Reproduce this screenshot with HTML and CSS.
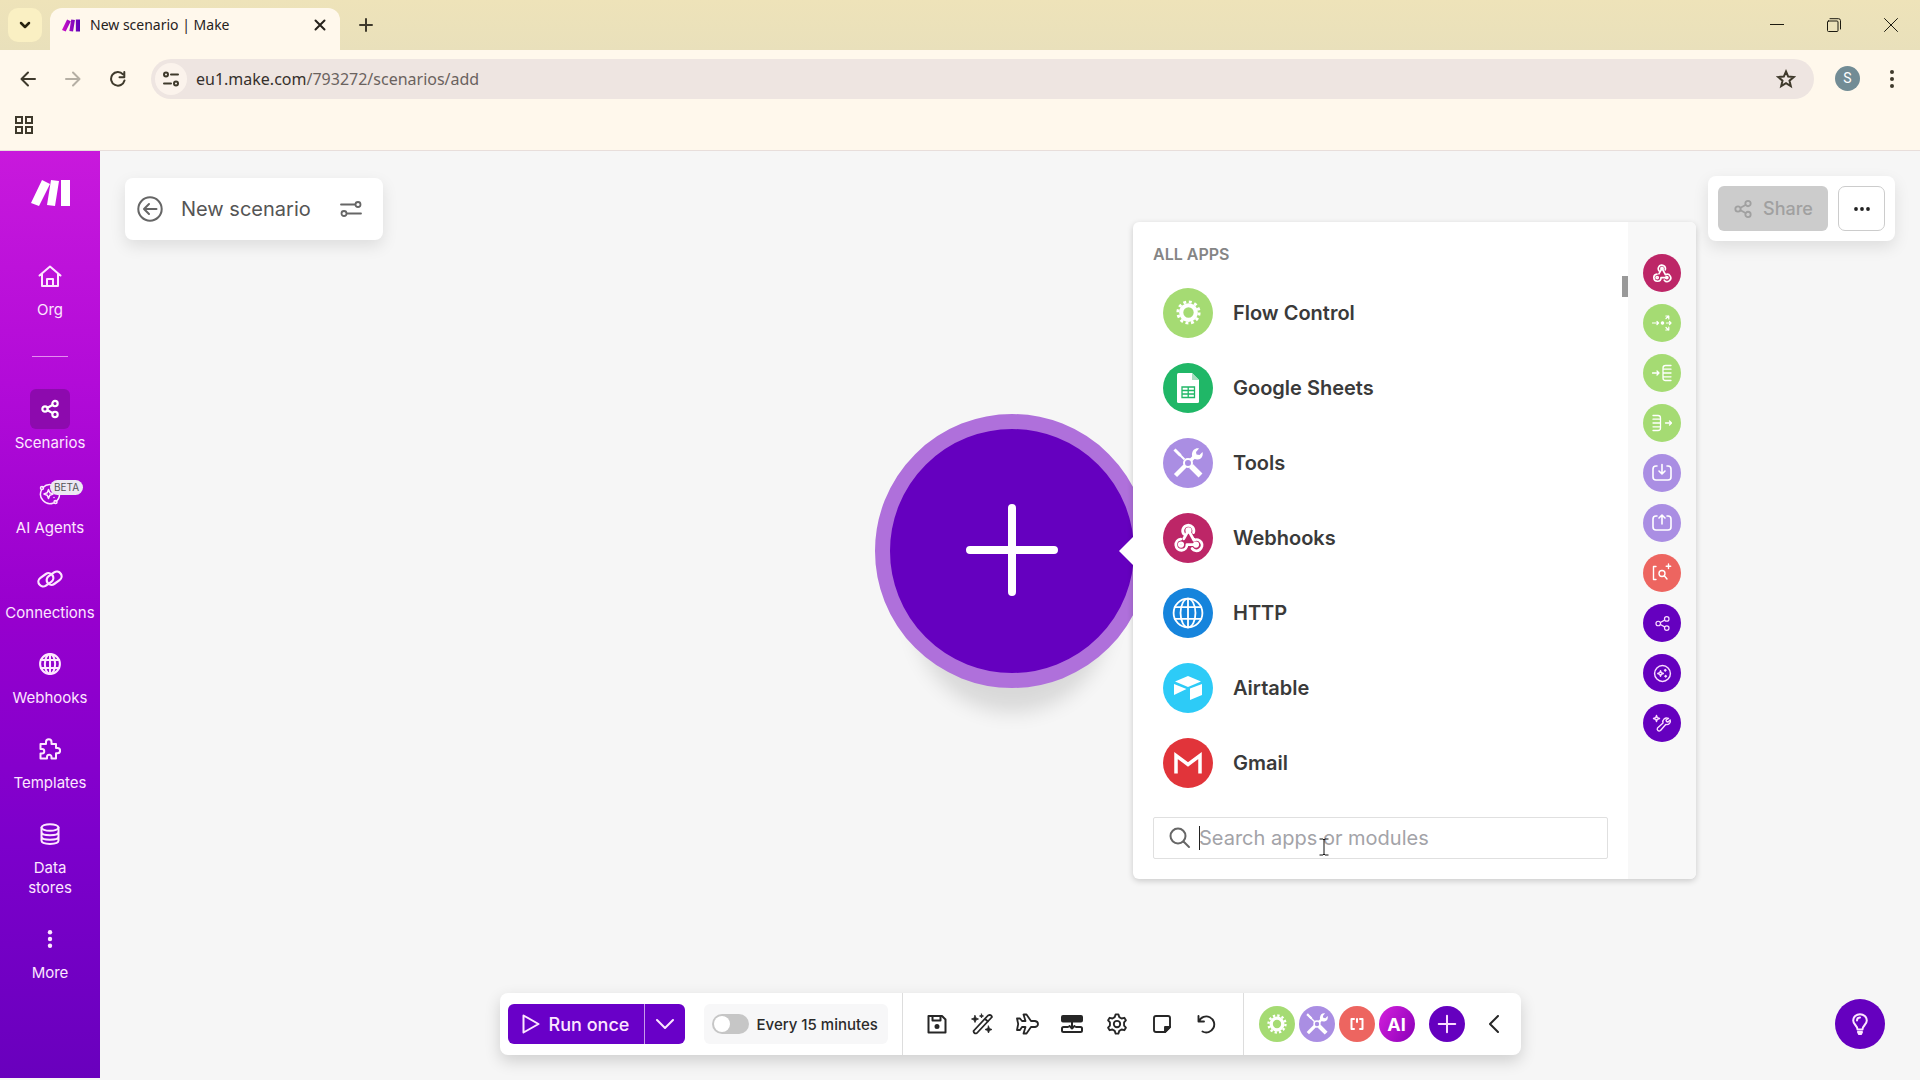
FILE: index.html
```html
<!DOCTYPE html>
<html lang="en">
<head>
<meta charset="utf-8">
<meta name="viewport" content="width=device-width, initial-scale=1">
<title>New scenario | Make</title>
<link rel="stylesheet" href="styles.css">
</head>
<body>
<svg class="defs" aria-hidden="true">
  <defs>
    <linearGradient id="brand" x1="0" y1="0" x2="1" y2="0"><stop offset="0" stop-color="#d010c8"/><stop offset="1" stop-color="#5a00b8"/></linearGradient>
    <symbol id="i-make" viewBox="0 0 39 26"><path d="M11 0l8 4-11 22-8-3zM20 0l8 1-4 25-8-1zM30 0h9v26h-9z"/></symbol>
    <symbol id="i-share" viewBox="0 0 24 24"><circle cx="6" cy="12" r="3.2"/><circle cx="18" cy="5.5" r="3.2"/><circle cx="18" cy="18.500" r="3.200"/><path d="M9 10.500l6-3.300M9 13.500l6 3.300"/></symbol>
    <symbol id="i-hook" viewBox="0 0 24 24"><path d="M8.300 9.300A4.300 4.300 0 1 1 15.900 8.200M12 6.500l4.200 7.600A4.300 4.300 0 1 1 14.800 20.600M12 6.500L8.300 13M17.800 17.500H10.800A4.300 4.300 0 1 1 6 13.300"/><circle cx="12" cy="6.500" r="1.300"/><circle cx="6.200" cy="17.500" r="1.300"/><circle cx="17.800" cy="17.500" r="1.300"/></symbol>
    <symbol id="i-gear-solid" viewBox="0 0 24 24"><circle cx="12" cy="12" r="7" fill="none" stroke="currentColor" stroke-width="4"/><circle cx="12" cy="12" r="10.200" fill="none" stroke="currentColor" stroke-width="2.800" stroke-dasharray="2.800 2.541"/></symbol>
    <symbol id="i-tools" viewBox="0 0 30 30"><g fill="none" stroke="currentColor"><circle cx="15" cy="15" r="4" stroke-width="2"/><path d="M11.500 11.500L5 5" stroke-width="2"/><path d="M1.500 1.500l6 6" stroke-width="3"/><path d="M18 18l9.500 9.500" stroke-width="5.500"/><path d="M12 18l-9.500 9.500" stroke-width="4.500"/><path d="M18 12l4-4" stroke-width="3.500"/></g><path d="M26 .5l-3 3.500.5 2.500 3 .5 3-3c1 4-1 7-4.500 7.500-4 .5-6.500-2-6-5.500C19.500 2 22.500-.3 26 .5z"/></symbol>
    <symbol id="i-globe" viewBox="0 0 30 30"><circle cx="15" cy="15" r="13.500"/><ellipse cx="15" cy="15" rx="7" ry="13.500"/><path d="M15 1.500v27M2.500 9.500h25M2.500 20.500h25"/></symbol>
    <symbol id="i-spark" viewBox="0 0 24 24"><path d="M19.500 6.500A9.500 9.500 0 0 0 5 5.500M3.500 8A9.500 9.500 0 0 0 15.500 21M18 19.500A9.500 9.500 0 0 0 21.500 12"/><circle cx="4" cy="6" r="1.500"/><circle cx="17.500" cy="20" r="1.500"/><path d="M10.500 7.500l1.300 3.200L15 12l-3.200 1.300-1.300 3.200-1.300-3.200L6 12l3.200-1.300z"/><path d="M16 8v.1M16 15.500v.1"/></symbol>
    <symbol id="i-search" viewBox="0 0 24 24"><circle cx="10" cy="10" r="7.500"/><path d="M15.500 15.500L21 21"/></symbol>
    <symbol id="i-plus" viewBox="0 0 24 24"><path d="M12 3v18M3 12h18"/></symbol>
  </defs>
</svg>

<header class="browser">
  <div class="tabstrip">
    <button class="tab-search" aria-label="Search tabs"><svg class="line" width="14" height="14" viewBox="0 0 14 14" stroke-width="2.500"><path d="M3 5l4 4 4-4"/></svg></button>
    <div class="tab">
      <svg width="18" height="13" fill="url(#brand)"><use href="#i-make"/></svg>
      <span class="tab-title">New scenario | Make</span>
      <button class="plain" aria-label="Close tab"><svg class="line" width="12" height="12" viewBox="0 0 12 12" stroke-width="2"><path d="M1.500 1.500l9 9M10.500 1.500l-9 9"/></svg></button>
    </div>
    <button class="plain new-tab" aria-label="New tab"><svg class="line" width="16" height="16" viewBox="0 0 24 24" stroke-width="3"><use href="#i-plus"/></svg></button>
    <div class="window-controls">
      <button class="plain" aria-label="Minimize"><svg class="line" width="14" height="14" viewBox="0 0 14 14"><path d="M0 6.500h14"/></svg></button>
      <button class="plain" aria-label="Restore"><svg class="line" width="14" height="14" viewBox="0 0 14 14"><rect x=".5" y="3" width="10.500" height="10.500" rx="1"/><path d="M3 .7h8.500q2 0 2 2V11"/></svg></button>
      <button class="plain" aria-label="Close"><svg class="line" width="14" height="14" viewBox="0 0 14 14"><path d="M.5.5l13 13M13.500.5l-13 13"/></svg></button>
    </div>
  </div>
  <div class="navbar">
    <button class="plain" aria-label="Back"><svg class="line" width="16" height="16" viewBox="0 0 16 16" stroke-width="2"><path d="M15 8H2M8 1.500L1.500 8 8 14.500"/></svg></button>
    <button class="plain dim" aria-label="Forward"><svg class="line" width="16" height="16" viewBox="0 0 16 16" stroke-width="2"><path d="M1 8h13M8 1.500L14.500 8 8 14.500"/></svg></button>
    <button class="plain" aria-label="Reload"><svg class="line" width="16" height="16" viewBox="0 0 16 16" stroke-width="2"><path d="M14.500 9.500A6.800 6.800 0 1 1 13 3.300M14.300 1v5.200H9.500"/></svg></button>
    <div class="address">
      <span class="site-info"><svg class="line" width="16" height="16" viewBox="0 0 16 16" stroke-width="2"><circle cx="3" cy="3.500" r="2"/><path d="M8 3.500h7M1 12.500h7"/><circle cx="13" cy="12.500" r="2"/></svg></span>
      <span class="url">eu1.make.com<span class="path">/793272/scenarios/add</span></span>
      <button class="plain" aria-label="Bookmark this page"><svg class="line" width="20" height="20" viewBox="0 0 20 20" stroke-width="2"><path stroke-linejoin="miter" d="M10 2.500l2.200 5.100 5.500.5-4.200 3.600 1.300 5.400-4.800-2.900-4.800 2.900 1.300-5.400-4.200-3.600 5.500-.5z"/></svg></button>
    </div>
    <span class="avatar">S</span>
    <button class="plain kebab" aria-label="Browser menu"><svg width="6" height="18" viewBox="0 0 6 18" fill="currentColor"><circle cx="3" cy="2" r="2"/><circle cx="3" cy="9" r="2"/><circle cx="3" cy="16" r="2"/></svg></button>
  </div>
  <div class="bookmarks">
    <button class="plain" aria-label="Tab groups"><svg class="line" width="18" height="18" viewBox="0 0 18 18" stroke-width="2"><path stroke-linejoin="miter" d="M1 1h6v6H1zM11 1h6v6h-6zM1 11h6v6H1zM11 11h6v6h-6z"/></svg></button>
  </div>
</header>

<div class="app">
  <nav class="sidebar">
    <a class="logo" href="#" aria-label="Make"><svg width="39" height="26" fill="#fff"><use href="#i-make"/></svg></a>
    <a class="nav-item" href="#"><span class="nav-icon"><svg class="line" width="24" height="24" viewBox="0 0 24 24" stroke-width="2"><path d="M1.500 11.500L12 2.500l10.500 9M4 10v12h16V10M9 22v-7h6v7"/></svg></span>Org</a>
    <span class="rule"></span>
    <a class="nav-item active" href="#"><span class="nav-icon"><svg class="line" width="20" height="20" stroke-width="2.600"><use href="#i-share"/></svg></span>Scenarios</a>
    <a class="nav-item" href="#"><span class="nav-icon"><svg class="line" width="24" height="24" stroke-width="1.500"><use href="#i-spark"/></svg><span class="beta">BETA</span></span>AI Agents</a>
    <a class="nav-item" href="#"><span class="nav-icon"><svg class="line" width="26" height="22" viewBox="0 0 26 22" stroke-width="2.200"><rect x="1" y="7" width="16" height="9.500" rx="4.700" transform="rotate(-35 9 12)"/><rect x="9" y="5.500" width="16" height="9.500" rx="4.700" transform="rotate(-35 17 10)"/></svg></span>Connections</a>
    <a class="nav-item" href="#"><span class="nav-icon"><svg class="line" width="22" height="22" stroke-width="2.800"><use href="#i-globe"/></svg></span>Webhooks</a>
    <a class="nav-item" href="#"><span class="nav-icon"><svg class="line" width="22" height="22" viewBox="0 0 22 22" stroke-width="2"><path d="M1.500 6H7V4a2.500 2.500 0 0 1 5.500 0v2H17v4h1.500a2.500 2.500 0 0 1 0 5.200H17v5.300h-4.500V19a2 2 0 0 0-4.500 0v1.500H1.500v-5H3a2.200 2.200 0 0 0 0-4.500H1.500z"/></svg></span>Templates</a>
    <a class="nav-item" href="#"><span class="nav-icon"><svg class="line" width="20" height="22" viewBox="0 0 20 22" stroke-width="2"><ellipse cx="10" cy="4.500" rx="8.500" ry="3.300"/><path d="M1.500 4.500v13c0 4.500 17 4.500 17 0v-13M1.500 9c0 4.300 17 4.300 17 0M1.500 13.500c0 4.300 17 4.300 17 0"/></svg></span>Data<br>stores</a>
    <a class="nav-item" href="#"><span class="nav-icon"><svg width="6" height="18" viewBox="0 0 6 18" fill="currentColor"><circle cx="3" cy="2.200" r="2.200"/><circle cx="3" cy="9" r="2.200"/><circle cx="3" cy="15.800" r="2.200"/></svg></span>More</a>
  </nav>

  <main class="canvas">
    <div class="topbar">
      <div class="title-card">
        <button class="plain" aria-label="Back to scenarios"><svg class="line" width="26" height="26" viewBox="0 0 26 26" stroke-width="2"><circle cx="13" cy="13" r="11.700"/><path d="M19.500 13h-12M12 8l-5 5 5 5"/></svg></button>
        <h1>New scenario</h1>
        <button class="plain" aria-label="Scenario inputs"><svg class="line" width="22" height="18" viewBox="0 0 22 18" stroke-width="1.800"><path d="M1 4.500h14M7 13.500h14"/><circle cx="18" cy="4.500" r="2.500"/><circle cx="4" cy="13.500" r="2.500"/></svg></button>
      </div>
      <div class="actions-card">
        <button class="share" disabled><svg class="line" width="20" height="20" stroke-width="2.200"><use href="#i-share"/></svg>Share</button>
        <button class="more" aria-label="More options"><svg width="16" height="4" viewBox="0 0 16 4" fill="currentColor"><circle cx="2" cy="2" r="1.900"/><circle cx="8" cy="2" r="1.900"/><circle cx="14" cy="2" r="1.900"/></svg></button>
      </div>
    </div>

    <button class="node" aria-label="Add a module"><svg class="line" width="94" height="94" viewBox="0 0 94 94" stroke-width="8"><path d="M47 4v84M5 46h84"/></svg></button>

    <section class="picker">
      <div class="apps">
        <h2>ALL APPS</h2>
        <ul class="app-list">
          <li><button class="app-row"><span class="badge flow"><svg width="25" height="25"><use href="#i-gear-solid"/></svg></span>Flow Control</button></li>
          <li><button class="app-row"><span class="badge sheets"><svg width="22" height="30" viewBox="0 0 22 30" fill="#fff"><path d="M1.500 0H15l7 7v21.500q0 1.500-1.500 1.500h-19Q0 30 0 28.500v-27Q0 0 1.500 0z"/><path fill="#a5dfc0" d="M15 0l7 7h-7z"/><path fill="none" stroke="#20b767" stroke-width="1.300" d="M5 14h12.500v10.500H5zM5 17.500h12.500M5 21h12.500M11.200 14v10.500"/></svg></span>Google Sheets</button></li>
          <li><button class="app-row"><span class="badge tools"><svg width="30" height="30" fill="currentColor"><use href="#i-tools"/></svg></span>Tools</button></li>
          <li><button class="app-row"><span class="badge hooks"><svg class="line" width="31" height="31" stroke-width="2.200"><use href="#i-hook"/></svg></span>Webhooks</button></li>
          <li><button class="app-row"><span class="badge http"><svg class="line" width="32" height="32" stroke-width="1.700"><use href="#i-globe"/></svg></span>HTTP</button></li>
          <li><button class="app-row"><span class="badge airtable"><svg width="28" height="26" viewBox="0 0 28 26" fill="#fff"><path d="M14 1l13 5.500L14 12 1 6.500zM28 9v11l-12 5V13.500zM0 9l12.500 5L0 20z"/></svg></span>Airtable</button></li>
          <li><button class="app-row"><span class="badge gmail"><svg width="28" height="22" viewBox="0 0 28 22" fill="none" stroke="#fff" stroke-width="3.500"><path d="M2 21.500V3.500l12 9 12-9v18"/></svg></span>Gmail</button></li>
        </ul>
        <div class="search">
          <svg class="line" width="24" height="24" stroke-width="2"><use href="#i-search"/></svg>
          <input type="text" placeholder="Search apps or modules" aria-label="Search apps or modules">
          <span class="caret"></span>
          <svg class="pointer" width="10" height="18" viewBox="0 0 10 18"><path d="M.5 1H4l1 1 1-1h3.500M5 2v14M.5 17H4l1-1 1 1h3.500"/></svg>
        </div>
        <span class="thumb"></span>
      </div>
      <div class="quick">
        <button class="dot hooks" aria-label="Webhook"><svg class="line" width="20" height="20" stroke-width="2"><use href="#i-hook"/></svg></button>
        <button class="dot flow" aria-label="Router"><svg class="line" width="20" height="20" viewBox="0 0 20 20" stroke-width="1.200"><path d="M.5 10h6M5 8.500L6.500 10 5 11.500M14.500 10H19M17.500 8.500L19 10l-1.500 1.500M14 5.500l2.500-2.500M13.800 3h3v3M14 14.500l2.500 2.500M16.800 14v3h-3"/><circle cx="10.500" cy="10" r="1.200" fill="currentColor"/></svg></button>
        <button class="dot flow" aria-label="Iterator"><svg class="line" width="20" height="20" viewBox="0 0 20 20" stroke-width="1.300"><path d="M.5 10H7M5 8l2 2-2 2M19 2.500h-5.500Q11 2.500 11 5v10q0 2.500 2.500 2.500H19M11 6.200h8M11 10h8M11 13.800h8"/></svg></button>
        <button class="dot flow" aria-label="Array aggregator"><svg class="line" width="20" height="20" viewBox="0 0 20 20" stroke-width="1.300"><path d="M13.500 10h6M17.500 8l2 2-2 2M1 2.500h5q2.500 0 2.500 2.500v10q0 2.500-2.500 2.500H1M1 6.200h7M1 10h7M1 13.800h7"/></svg></button>
        <button class="dot tools" aria-label="Set variable"><svg class="line" width="20" height="20" viewBox="0 0 20 20" stroke-width="1.600"><path d="M5 3H4Q1 3 1 6v8q0 3 3 3h12q3 0 3-3V6q0-3-3-3h-1M10 1.500v9M7 8l3 3 3-3"/></svg></button>
        <button class="dot tools" aria-label="Get variable"><svg class="line" width="20" height="20" viewBox="0 0 20 20" stroke-width="1.600"><path d="M5 3H4Q1 3 1 6v8q0 3 3 3h12q3 0 3-3V6q0-3-3-3h-1M10 11V2M7 5l3-3 3 3"/></svg></button>
        <button class="dot parser" aria-label="Match pattern"><svg class="line" width="20" height="20" viewBox="0 0 20 20" stroke-width="1.400"><path d="M4 3.500H1.500v13H4M16.500 1v4.500M14.200 3.200h4.500M12.500 13l2.500 3"/><circle cx="10" cy="10.500" r="3"/></svg></button>
        <button class="dot make" aria-label="Scenarios"><svg class="line" width="17" height="17" stroke-width="1.700"><use href="#i-share"/></svg></button>
        <button class="dot make" aria-label="AI agent"><svg class="line" width="19" height="19" viewBox="0 0 24 24" stroke-width="1.800"><circle cx="12" cy="12" r="10"/><path d="M9.500 8.500l1 2.500 2.500 1-2.500 1-1 2.500-1-2.500L6 12l2.500-1zM15.500 7v2M14.500 8h2M16 14.500v2M15 15.500h2"/></svg></button>
        <button class="dot make" aria-label="AI tools"><svg class="line" width="20" height="20" viewBox="0 0 20 20" stroke-width="1.400"><path d="M4.500 2.500l.8 2.200 2.200.8-2.200.8-.8 2.200-.8-2.200-2.200-.8 2.200-.8zM16.500 5.500l-2.500 1.500.5 1.500 1.500.5 2.200-2c1 3-1.500 5-4.500 4.500L8.500 17.500c-2 1.500-4-.5-3-2.500l5.500-5C10 7 13 4 16.500 5.500z"/></svg></button>
      </div>
    </section>

    <div class="bottombar">
      <div class="controls">
        <div class="group run-group">
          <div class="run">
            <button class="run-main"><svg class="line" width="18" height="20" viewBox="0 0 18 20" stroke-width="2"><path d="M1.500 1.500l15 8.500-15 8.500z"/></svg>Run once</button>
            <button class="run-menu" aria-label="Run options"><svg class="line" width="18" height="10" viewBox="0 0 18 10" stroke-width="2"><path d="M1 1l8 8 8-8"/></svg></button>
          </div>
          <label class="schedule"><input type="checkbox" class="switch">Every 15 minutes</label>
        </div>
        <div class="group icons">
          <button class="plain" aria-label="Save"><svg class="line" width="20" height="20" viewBox="0 0 20 20" stroke-width="2"><path d="M2 2h13l3.500 3.500V18.500H1.500V2zM5.500 2v4.500h8V2"/><circle cx="10" cy="12.500" r="1.500" fill="currentColor"/></svg></button>
          <button class="plain" aria-label="Auto-align"><svg class="line" width="22" height="22" viewBox="0 0 22 22" stroke-width="1.800"><path d="M2.500 18L17 2.500q3-1.500 4 1.500L6 20q-3 1.500-3.500-2zM14 6l3 2.500"/><path fill="currentColor" stroke-width=".8" d="M4 2.500l1 2.500 2.500 1L5 7 4 9.500 3 7 .5 6 3 5zM17.500 13l1 2.500L21 16.500l-2.500 1-1 2.500-1-2.500-2.500-1 2.500-1zM10.500 1l.5 1.500 1.500.5-1.500.5-.5 1.500-.5-1.500L8.500 3l1.500-.5z"/></svg></button>
          <button class="plain" aria-label="Explain flow"><svg class="line" width="24" height="22" viewBox="0 0 24 22" stroke-width="1.800"><path d="M8.500 1.500h3L16 8h4q3 .5 3 3t-3 3h-4l-4.500 6.500h-3L10.500 14H7l-2 3H2l1.200-6L2 5.500h3L7 8h3.500z"/></svg></button>
          <button class="plain" aria-label="Align modules"><svg class="line" width="22" height="18" viewBox="0 0 22 18" stroke-width="2"><rect x="1" y="1" width="20" height="5.500" rx="1" fill="currentColor"/><path d="M7 12H2.500Q1 12 1 13.500v2Q1 17 2.500 17h17q1.500 0 1.500-1.500v-2q0-1.500-1.500-1.500H15M11 7v6M8.500 11l2.500 2.500 2.500-2.500"/></svg></button>
          <button class="plain" aria-label="Settings"><svg class="line" width="22" height="22" viewBox="0 0 24 24" stroke-width="2"><path d="M9.500 4.500l1-3h3l1 3 2.500 1.500 3-.8 1.700 2.800-2 2.300v3.400l2 2.300-1.700 2.800-3-.8-2.500 1.500-1 3h-3l-1-3L7 18l-3 .8L2.300 16l2-2.300v-3.400l-2-2.300L4 5.200l3 .8z"/><circle cx="12" cy="12" r="3.500"/></svg></button>
          <button class="plain" aria-label="Notes"><svg class="line" width="18" height="18" viewBox="0 0 18 18" stroke-width="1.900"><path d="M3 1h12q2 0 2 2v9l-5 5H3q-2 0-2-2V3q0-2 2-2z"/><path fill="currentColor" d="M12 17v-5h5z"/></svg></button>
          <button class="plain" aria-label="Undo"><svg class="line" width="20" height="20" viewBox="0 0 20 20" stroke-width="1.900"><path d="M1.500 2v5.500H7M2 7A8 8 0 1 1 5.500 17.500"/></svg></button>
        </div>
        <div class="group favorites">
          <button class="fav flow" aria-label="Flow Control"><svg width="20" height="20"><use href="#i-gear-solid"/></svg></button>
          <button class="fav tools" aria-label="Tools"><svg width="22" height="22" fill="currentColor"><use href="#i-tools"/></svg></button>
          <button class="fav parser" aria-label="Text parser"><svg class="line" width="14" height="12" viewBox="0 0 14 12" stroke-width="2"><path d="M4 1H1.500v10H4M10 1h2.500v10H10M7 1v3"/></svg></button>
          <button class="fav ai">AI</button>
          <button class="fav make add" aria-label="Add favorite"><svg class="line" width="22" height="22" stroke-width="2.200"><use href="#i-plus"/></svg></button>
          <button class="plain collapse" aria-label="Collapse"><svg class="line" width="10" height="18" viewBox="0 0 10 18" stroke-width="2"><path d="M9 1L1 9l8 8"/></svg></button>
        </div>
      </div>
      <button class="help" aria-label="Tips"><svg class="line" width="16" height="22" viewBox="0 0 16 22" stroke-width="2"><path d="M5.500 16.500C5.500 12.500 1.200 11.500 1.200 7.500a6.800 6.300 0 0 1 13.600 0c0 4-4.300 5-4.300 9zM8 4.500Q5 4.500 5 7.500"/><path fill="currentColor" d="M6 19h4l-1 2H7z"/></svg></button>
    </div>
  </main>
</div>
</body>
</html>
```
FILE: styles.css
```css
* { box-sizing: border-box; }

body {
  margin: 0;
  min-height: 100vh;
  display: flex;
  flex-direction: column;
  font-family: Inter, "Liberation Sans", sans-serif;
  background: #f6f6f6;
  overflow: hidden;
}

button { font: inherit; color: inherit; border: 0; padding: 0; cursor: pointer; }
svg { display: block; flex: none; }
.defs { position: absolute; width: 0; height: 0; }
.line { fill: none; stroke: currentColor; stroke-linecap: round; stroke-linejoin: round; }
.plain { display: grid; place-items: center; background: none; }

/* Browser chrome */
.browser {
  background: #fff8ec;
  border-bottom: 1px solid #e8dedb;
  color: #3f3a2c;
  font-family: "Noto Sans", "Open Sans", sans-serif;
}
.tabstrip {
  height: 50px;
  display: flex;
  align-items: center;
  padding: 0 14px 0 8px;
  background: linear-gradient(#eee3b9, #e9e0bb);
}
.tab-search {
  width: 34px;
  height: 34px;
  display: grid;
  place-items: center;
  border-radius: 10px;
  background: #faf0c3;
  color: #26220f;
}
.tab {
  align-self: stretch;
  width: 290px;
  margin: 8px 0 0 8px;
  padding: 0 14px 8px 12px;
  display: flex;
  align-items: center;
  border-radius: 12px 12px 0 0;
  background: #fff8ec;
  color: #26221c;
}
.tab-title { flex: 1; padding-left: 10px; font-size: 14px; line-height: 20px; }
.new-tab { margin-left: 18px; }
.window-controls { display: flex; gap: 43px; margin-left: auto; padding-right: 8px; color: #1c1a10; }
.navbar { height: 57px; display: flex; align-items: center; padding: 0 25px 0 20px; gap: 29px; }
.dim { color: #b5afa4; }
.address {
  flex: 1;
  height: 40px;
  margin-left: -4px;
  padding: 0 18px 0 4px;
  display: flex;
  align-items: center;
  border-radius: 20px;
  background: #eee5e1;
}
.site-info {
  width: 32px;
  height: 32px;
  display: grid;
  place-items: center;
  border-radius: 50%;
  background: #fbf3ec;
}
.url { flex: 1; padding-left: 9px; font-size: 16px; line-height: 24px; color: #35302c; }
.path { color: #6a625e; }
.avatar {
  width: 25px;
  height: 25px;
  margin-left: -8px;
  border-radius: 50%;
  background: #728c95;
  color: #fff;
  font: 14px/25px Roboto, sans-serif;
  text-align: center;
}
.bookmarks { height: 43px; padding: 9px 15px; display: flex; align-items: flex-start; }

/* Application frame */
.app { flex: 1; display: flex; padding-bottom: 2px; }
.sidebar {
  width: 100px;
  padding-top: 29px;
  display: flex;
  flex-direction: column;
  align-items: center;
  gap: 21px;
  background: linear-gradient(#c819dc, #b20bd8 25%, #9700ce 50%, #7c00cb 75%, #6900bd);
  color: #fde6ff;
}
.logo { margin-bottom: 29px; }
.nav-item {
  display: flex;
  flex-direction: column;
  align-items: center;
  font-size: 15px;
  font-weight: 400;
  line-height: 20px;
  text-align: center;
  color: inherit;
  text-decoration: none;
}
.nav-icon {
  position: relative;
  width: 40px;
  height: 40px;
  margin-bottom: 4px;
  display: grid;
  place-items: center;
  border-radius: 6px;
}
.active .nav-icon { background: #8d0aae; color: #fff; }
.rule { width: 36px; height: 1px; margin: 15px 0 11px; background: #e58df0; }
.beta {
  position: absolute;
  left: 20px;
  top: 6px;
  padding: 0 4px;
  border-radius: 8px;
  background: #ece8f2;
  color: #555;
  font-size: 10px;
  line-height: 15px;
}

/* Scenario canvas */
.canvas {
  position: relative;
  flex: 1;
  display: flex;
  flex-direction: column;
  justify-content: space-between;
  padding: 25px 25px 23px;
}
.topbar { display: flex; justify-content: space-between; align-items: center; }
.title-card,
.actions-card {
  display: flex;
  align-items: center;
  border-radius: 8px;
  background: #fff;
  box-shadow: 0 6px 16px rgba(0, 0, 0, .1);
}
.title-card { height: 62px; padding: 0 21px 0 12px; color: #666; }
.title-card h1 { margin: 0 29px 0 18px; font-size: 20px; font-weight: 400; line-height: 28px; color: #555; }
.actions-card { height: 65px; padding: 0 10px; gap: 10px; }
.share {
  width: 110px;
  height: 45px;
  display: flex;
  align-items: center;
  justify-content: center;
  gap: 10px;
  border-radius: 6px;
  background: #ccc;
  color: #a0a0a0;
  font-size: 18px;
  font-weight: 500;
}
.more {
  width: 47px;
  height: 45px;
  display: grid;
  place-items: center;
  border: 1px solid #ccc;
  border-radius: 7px;
  background: #fff;
  color: #222;
}

.node {
  position: absolute;
  left: calc(50% - 135px);
  top: 263px;
  width: 274px;
  height: 274px;
  display: grid;
  place-items: center;
  border: 15px solid #af70db;
  border-radius: 50%;
  background: #6500bf;
  color: #fff;
  box-shadow: 0 64px 20px -40px rgba(0, 0, 0, .12);
}

/* Module picker */
.picker {
  position: absolute;
  left: calc(50% + 123px);
  top: 71px;
  display: flex;
  border-radius: 6px;
  background: #fff;
  box-shadow: 0 2px 6px rgba(0, 0, 0, .18);
}
.picker::before {
  content: "";
  position: absolute;
  left: -14px;
  top: 315px;
  border: solid transparent;
  border-width: 14px 14px 14px 0;
  border-right-color: #fff;
}
.apps { position: relative; width: 495px; padding: 20px; }
.apps h2 { margin: 0; font-size: 16px; font-weight: 600; line-height: 24px; color: #858585; }
.app-list { margin: 9px 0 17px; padding: 0; list-style: none; }
.app-row {
  width: 100%;
  height: 75px;
  padding-left: 10px;
  display: flex;
  align-items: center;
  gap: 20px;
  background: none;
  font-size: 20px;
  font-weight: 600;
  color: #3a3a3a;
}
.badge, .dot, .fav { display: grid; place-items: center; border-radius: 50%; color: #fff; }
.badge { width: 50px; height: 50px; }
.flow { background: #a5db73; }
.sheets { background: #20b767; }
.tools { background: #aa8ee3; }
.hooks { background: #bd2667; }
.http { background: #1684dc; }
.airtable { background: #2dcbf7; }
.gmail { background: #e1343a; }
.parser { background: #ed6560; }
.make { background: #6500bf; color: #fbdcff; }
.search {
  position: relative;
  height: 42px;
  display: flex;
  align-items: center;
  padding-left: 14px;
  gap: 7px;
  border: 1px solid #e0e0e0;
  border-radius: 2px;
  color: #666;
}
.search input {
  flex: 1;
  min-width: 0;
  height: 40px;
  border: 0;
  padding: 0;
  outline: 0;
  background: none;
  font: 20px/24px Inter, "Liberation Sans", sans-serif;
}
.search input::placeholder { color: #a3a3a8; opacity: 1; }
.caret { position: absolute; left: 45px; top: 8px; width: 1px; height: 24px; background: #222; }
.pointer { position: absolute; left: 165px; top: 20px; fill: none; stroke: #111; stroke-width: 1; }
.thumb { position: absolute; right: 0; top: 54px; width: 6px; height: 21px; background: #999; }
.quick {
  width: 68px;
  padding: 32px 15px;
  display: flex;
  flex-direction: column;
  gap: 12px;
  border-radius: 0 6px 6px 0;
  background: #f8f8f8;
}
.dot { width: 38px; height: 38px; }

/* Bottom toolbar */
.bottombar { display: grid; grid-template-columns: 1fr auto 1fr; align-items: center; }
.controls {
  grid-column: 2;
  display: flex;
  height: 62px;
  border-radius: 8px;
  background: #fff;
  box-shadow: 0 6px 16px rgba(0, 0, 0, .16);
}
.group { display: flex; align-items: center; }
.group + .group { border-left: 1px solid #ddd; }
.run-group { padding: 0 14px 0 8px; gap: 19px; }
.run { display: flex; height: 40px; border-radius: 6px; background: #6900c8; color: #fde6ff; overflow: hidden; }
.run button { display: flex; align-items: center; justify-content: center; background: none; }
.run .run-main { width: 136px; gap: 9px; font-size: 18px; font-weight: 500; }
.run .run-menu { width: 41px; border-left: 1px solid #c79aea; }
.schedule {
  width: 184px;
  height: 40px;
  padding-left: 8px;
  display: flex;
  align-items: center;
  gap: 8px;
  border-radius: 6px;
  background: #f7f7f8;
  color: #2b2b2b;
  font-size: 15px;
  font-weight: 500;
}
.switch {
  appearance: none;
  width: 37px;
  height: 20px;
  margin: 0;
  padding: 2px;
  border-radius: 10px;
  background: #c6c6c6;
}
.switch::before { content: ""; display: block; width: 16px; height: 16px; border-radius: 50%; background: #fff; }
.icons { padding: 0 13px 0 12px; color: #262626; }
.icons .plain { width: 45px; height: 45px; }
.favorites { padding: 0 17px 0 15px; gap: 4px; }
.fav { width: 36px; height: 36px; }
.fav.ai { background: linear-gradient(120deg, #d420dc, #8a00b8); font-size: 18px; font-weight: 700; }
.fav.add { margin-left: 10px; }
.collapse { width: 20px; height: 36px; margin-left: 15px; color: #262626; }
.help {
  justify-self: end;
  width: 50px;
  height: 50px;
  margin-right: 10px;
  display: grid;
  place-items: center;
  border-radius: 50%;
  background: #6500bf;
  color: #fde6ff;
}
```
